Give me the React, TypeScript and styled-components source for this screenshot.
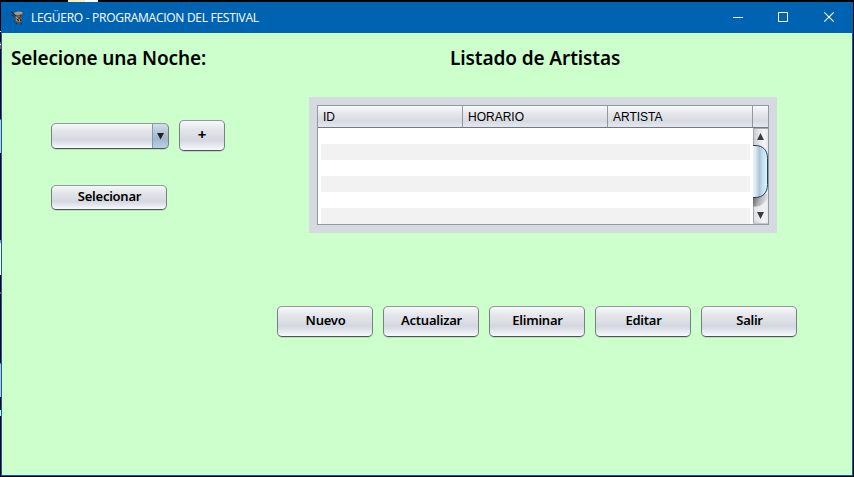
import React from "react";
import styled, { createGlobalStyle } from "styled-components";

const GlobalStyle = createGlobalStyle`
  * { box-sizing: border-box; }
  html, body { margin: 0; padding: 0; background: #000; overflow: hidden; }
`;

const Desktop = styled.div`
  width: 854px;
  height: 477px;
  padding: 2px 1px 1px 1px;
  background:
    linear-gradient(90deg, #fdf0b0 0 17px, #fff 17px) 68px 0 / 30px 2px no-repeat,
    linear-gradient(180deg,
      #000 0 31px, #fff 31px 32px, #000 32px 42px, #a84a10 42px 44px, #fff 44px 45px, #a84a10 45px 49px,
      #000 49px 119px, #666 119px 120px, #c8c8c8 120px 153px,
      #000 153px 240px, #999 240px 243px, #fff 243px 275px, #000 275px 292px, #b84a10 292px 294px,
      #000 294px 363px, #777 363px 364px, #c8c0c4 364px 397px, #000 397px 410px, #b8ffe8 410px 416px, #000 416px) 0 0 / 1px 477px no-repeat,
    #000;
`;

const Frame = styled.div`
  width: 852px;
  height: 474px;
  border: 1px solid #0063b1;
  background: #ccffcc;
`;

const TitleBar = styled.header`
  display: flex;
  align-items: center;
  height: 30px;
  padding-left: 8px;
  background: #0063b1;
  color: #fff;
`;

const Title = styled.span`
  flex: 1;
  padding-left: 5px;
  font: 12px/16px "Open Sans", "Noto Sans", sans-serif;
  letter-spacing: -0.28px;
  white-space: nowrap;
`;

const Caption = styled.div`
  display: flex;
  height: 30px;
  svg { display: block; }
`;

const Content = styled.main`
  display: grid;
  grid-template-columns: 307px 468px;
  grid-template-rows: 64px 209px 31px;
`;

const Heading = styled.h1<{ $indent: number; $spacing: number }>`
  margin: 11px 0 0 ${(p) => p.$indent}px;
  font: 600 19px/28px "Noto Sans", sans-serif;
  letter-spacing: ${(p) => p.$spacing}px;
  color: #000;
  white-space: nowrap;
`;

const NightPanel = styled.section`
  padding: 23px 0 0 49px;
`;

const PickerRow = styled.div`
  display: flex;
  align-items: center;
  gap: 10px;
  margin-bottom: 34px;
`;

const nimbusFace = "linear-gradient(180deg, #f7f8fa 0%, #e4e6eb 28%, #dcdfe5 48%, #d4d7df 66%, #e3e6ed 82%, #f8faff 100%)";

const Button = styled.button<{ $w: number; $h: number }>`
  display: flex;
  flex: none;
  align-items: center;
  justify-content: center;
  width: ${(p) => p.$w}px;
  height: ${(p) => p.$h}px;
  padding: 0 0 3px 1px;
  border: 1px solid #7b7e83;
  border-top-color: #95989c;
  border-bottom-color: #505359;
  border-radius: 5px;
  background: ${nimbusFace};
  box-shadow: 0 1px 0 #b4dfb7;
  color: #000;
  font: 600 13px/16px "Noto Sans", sans-serif;
  letter-spacing: -0.25px;
`;

const AddButton = styled(Button)`
  padding-left: 0;
  font-weight: 700;
  font-size: 15px;
`;

const Combo = styled.div`
  display: flex;
  width: 118px;
  height: 26px;
  border: 1px solid #7b7e83;
  border-top-color: #95989c;
  border-bottom-color: #505359;
  border-radius: 5px;
  overflow: hidden;
  background: ${nimbusFace};
  box-shadow: 0 1px 0 #b4dfb7;
`;

const ComboArrow = styled.span`
  width: 17px;
  height: 26px;
  margin: -1px -1px -1px auto;
  border: 1px solid #324b66;
  border-top-color: #607b96;
  border-left-color: #8499ad;
  border-radius: 0 5px 5px 0;
  background: linear-gradient(180deg, #d2dfe9 0%, #b4c7d7 35%, #a2b7ca 62%, #b9d0e4 100%);
  svg { display: block; }
`;

const TablePanel = styled.section`
  height: 136px;
  padding: 8px;
  background: #d6d9df;
`;

const Table = styled.div`
  height: 120px;
  border: 1px solid #9297a1;
  background: #fff;
`;

const HeaderRow = styled.div`
  display: grid;
  grid-template-columns: 145px 145px 145px 15px;
  height: 22px;
  border-bottom: 1px solid #727783;
  background: linear-gradient(180deg, #f9fafb 0%, #e5e7eb 35%, #d7dae1 72%, #e5e8ef 100%);
`;

const HeaderCell = styled.div`
  padding: 1px 0 0 5px;
  border-right: 1px solid #9297a1;
  font: 12px/20px "Liberation Sans", Arial, sans-serif;
  color: #000;
  &:last-child { border-right: 0; }
`;

const TableBody = styled.div`
  display: flex;
  justify-content: space-between;
  height: 96px;
  padding-left: 3px;
`;

const Rows = styled.div`
  width: 429px;
`;

const Row = styled.div<{ $alt: boolean }>`
  height: 16px;
  background: ${(p) => (p.$alt ? "#f2f2f2" : "#fff")};
`;

const ScrollBar = styled.div`
  width: 15px;
  height: 96px;
  svg { display: block; }
`;

const Actions = styled.nav`
  grid-column: 1 / -1;
  display: flex;
  gap: 10px;
  padding-left: 275px;
`;

const DrumIcon = () => (
  <svg width="16" height="16" viewBox="0 0 16 16">
    <path d="M1 1.500l3 2.500M2 5l2.500 1.500M4 11l2 1M6 14l1.500-2M11 12.500v2" stroke="#2c2624" strokeWidth="1.200" />
    <path d="M3.500 3 12.500 1.500l.3 2.500-1.300 2.500.5 5.500-3 1.200-4-1.200L5 7z" fill="#62554d" />
    <path d="M4 2.800 8 1.500l4.500.5-.5 2-4 1-3-.6z" fill="#a99c91" />
    <path d="M6 7l1.500 1L6.500 11M9 6l1 2-1 4" stroke="#b3aaa1" fill="none" />
    <path d="M4 4l2 2M11 5l-1.500 3 1.500 3M7 9l2 2" stroke="#29211e" fill="none" />
  </svg>
);

const CaptionIcons = () => (
  <Caption>
    <svg width="138" height="30" viewBox="0 0 138 30" fill="none" stroke="#fff">
      <path d="M19 14.500h10" />
      <path d="M64.500 9.500h9v9h-9z" />
      <path d="M110.300 9.300l9.400 9.400M119.700 9.300l-9.400 9.400" strokeWidth="1.100" />
    </svg>
  </Caption>
);

const ScrollDrawing = () => (
  <svg width="15" height="96" viewBox="0 0 15 96">
    <defs>
      <linearGradient id="track"><stop offset="0" stopColor="#c6c7ca" /><stop offset=".35" stopColor="#e2e3e5" /><stop offset=".75" stopColor="#f5f5f6" /><stop offset="1" stopColor="#e5e6e9" /></linearGradient>
      <linearGradient id="thumb"><stop offset="0" stopColor="#eef4f9" /><stop offset=".2" stopColor="#d8e5ef" /><stop offset=".45" stopColor="#abc3d7" /><stop offset=".62" stopColor="#c2dcec" /><stop offset="1" stopColor="#def6ff" /></linearGradient>
      <linearGradient id="shade" x1="0" y1="0" x2="1" y2="0.300"><stop offset="0" stopColor="#55565a" /><stop offset=".5" stopColor="#a9aaad" /><stop offset="1" stopColor="#e2e3e5" /></linearGradient>
    </defs>
    <path d="M0 0h15v96H0z" fill="url(#track)" />
    <path d="M.5 0v96M0 .5h15" stroke="#a5a8ae" />
    <path d="M0 95.500h15" stroke="#c1c4ca" />
    <path d="M0 66h14.500v4C12 75 8 78.500 2 78.500H0z" fill="url(#shade)" />
    <path d="M14.500 71C12 76 8 79 1 79v14h13.500z" fill="#eeeef0" opacity=".6" />
    <path d="M0 17.500h2c8 0 12.500 4.500 12.500 13v26c0 8-4.500 13-12.500 13H0" fill="url(#thumb)" stroke="#243f58" />
    <path d="M4 12h7L7.500 5zM4 84h7l-3.500 7z" fill="#3b3c3f" />
  </svg>
);

const columns = ["ID", "HORARIO", "ARTISTA", ""];
const actions = ["Nuevo", "Actualizar", "Eliminar", "Editar", "Salir"];

export default function App() {
  return (
    <Desktop>
      <GlobalStyle />
      <Frame>
        <TitleBar>
          <DrumIcon />
          <Title>LEGÜERO - PROGRAMACION DEL FESTIVAL</Title>
          <CaptionIcons />
        </TitleBar>
        <Content>
          <Heading $indent={9} $spacing={-0.15}>Selecione una Noche:</Heading>
          <Heading $indent={141} $spacing={-0.1}>Listado de Artistas</Heading>
          <NightPanel>
            <PickerRow>
              <Combo>
                <ComboArrow>
                  <svg width="15" height="24" viewBox="0 0 15 24"><path d="M4 9h7l-3.500 6.500z" fill="#222" /></svg>
                </ComboArrow>
              </Combo>
              <AddButton $w={46} $h={31}>+</AddButton>
            </PickerRow>
            <Button $w={116} $h={25}>Selecionar</Button>
          </NightPanel>
          <TablePanel>
            <Table>
              <HeaderRow>
                {columns.map((name) => <HeaderCell key={name}>{name}</HeaderCell>)}
              </HeaderRow>
              <TableBody>
                <Rows>
                  {Array.from({ length: 6 }, (_, i) => <Row key={i} $alt={i % 2 === 1} />)}
                </Rows>
                <ScrollBar><ScrollDrawing /></ScrollBar>
              </TableBody>
            </Table>
          </TablePanel>
          <Actions>
            {actions.map((label) => <Button key={label} $w={96} $h={31}>{label}</Button>)}
          </Actions>
        </Content>
      </Frame>
    </Desktop>
  );
}
